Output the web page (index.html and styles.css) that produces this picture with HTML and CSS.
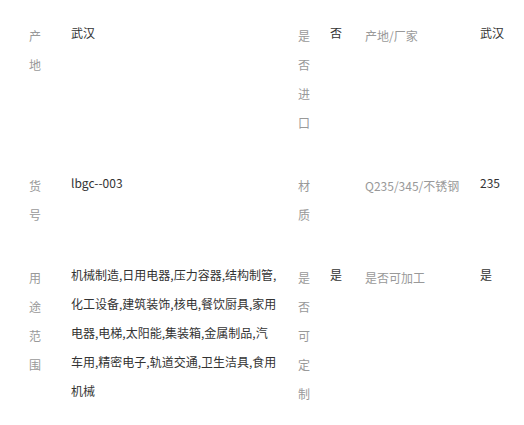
FILE: index.html
```html
<!DOCTYPE html>
<html lang="zh-CN">
<head>
    <meta charset="UTF-8">
    <meta name="viewport" content="width=device-width, initial-scale=1.0">
    <title>产品参数</title>
    <link rel="stylesheet" href="styles.css">
</head>
<body>
    <div class="spec-grid">
        <!-- row 1 -->
        <div class="label stack">产地</div>
        <div class="value desc">武汉</div>
        <div class="label stack">是否进口</div>
        <div class="value">否</div>
        <div class="label">产地/厂家</div>
        <div class="value">武汉</div>

        <!-- row 2 -->
        <div class="label stack">货号</div>
        <div class="value desc">lbgc--003</div>
        <div class="label stack">材质</div>
        <div class="value"></div>
        <div class="label">Q235/345/不锈钢</div>
        <div class="value">235</div>

        <!-- row 3 -->
        <div class="label stack">用途范围</div>
        <div class="value desc">机械制造,日用电器,压力容器,结构制管,化工设备,建筑装饰,核电,餐饮厨具,家用电器,电梯,太阳能,集装箱,金属制品,汽车用,精密电子,轨道交通,卫生洁具,食用机械</div>
        <div class="label stack">是否可定制</div>
        <div class="value">是</div>
        <div class="label">是否可加工</div>
        <div class="value">是</div>
    </div>
</body>
</html>
```

FILE: styles.css
```css
body {
    margin: 0;
    background-color: #fff;
    font-family: "Noto Sans CJK SC", "Noto Sans", sans-serif;
    font-size: 12px;
    line-height: 29px;
}
.spec-grid {
    display: grid;
    grid-template-columns: 42px 227px 32px 35px 115px 1fr;
    padding-left: 29px;
    padding-top: 1px;
}
.label {
    color: #999;
    padding: 20px 0 14px;
}
.label.stack {
    width: 12px;
    justify-self: start;
}
.value {
    color: #333;
    padding: 17px 0 14px;
}
.value.desc {
    padding-right: 20.5px;
}
```
